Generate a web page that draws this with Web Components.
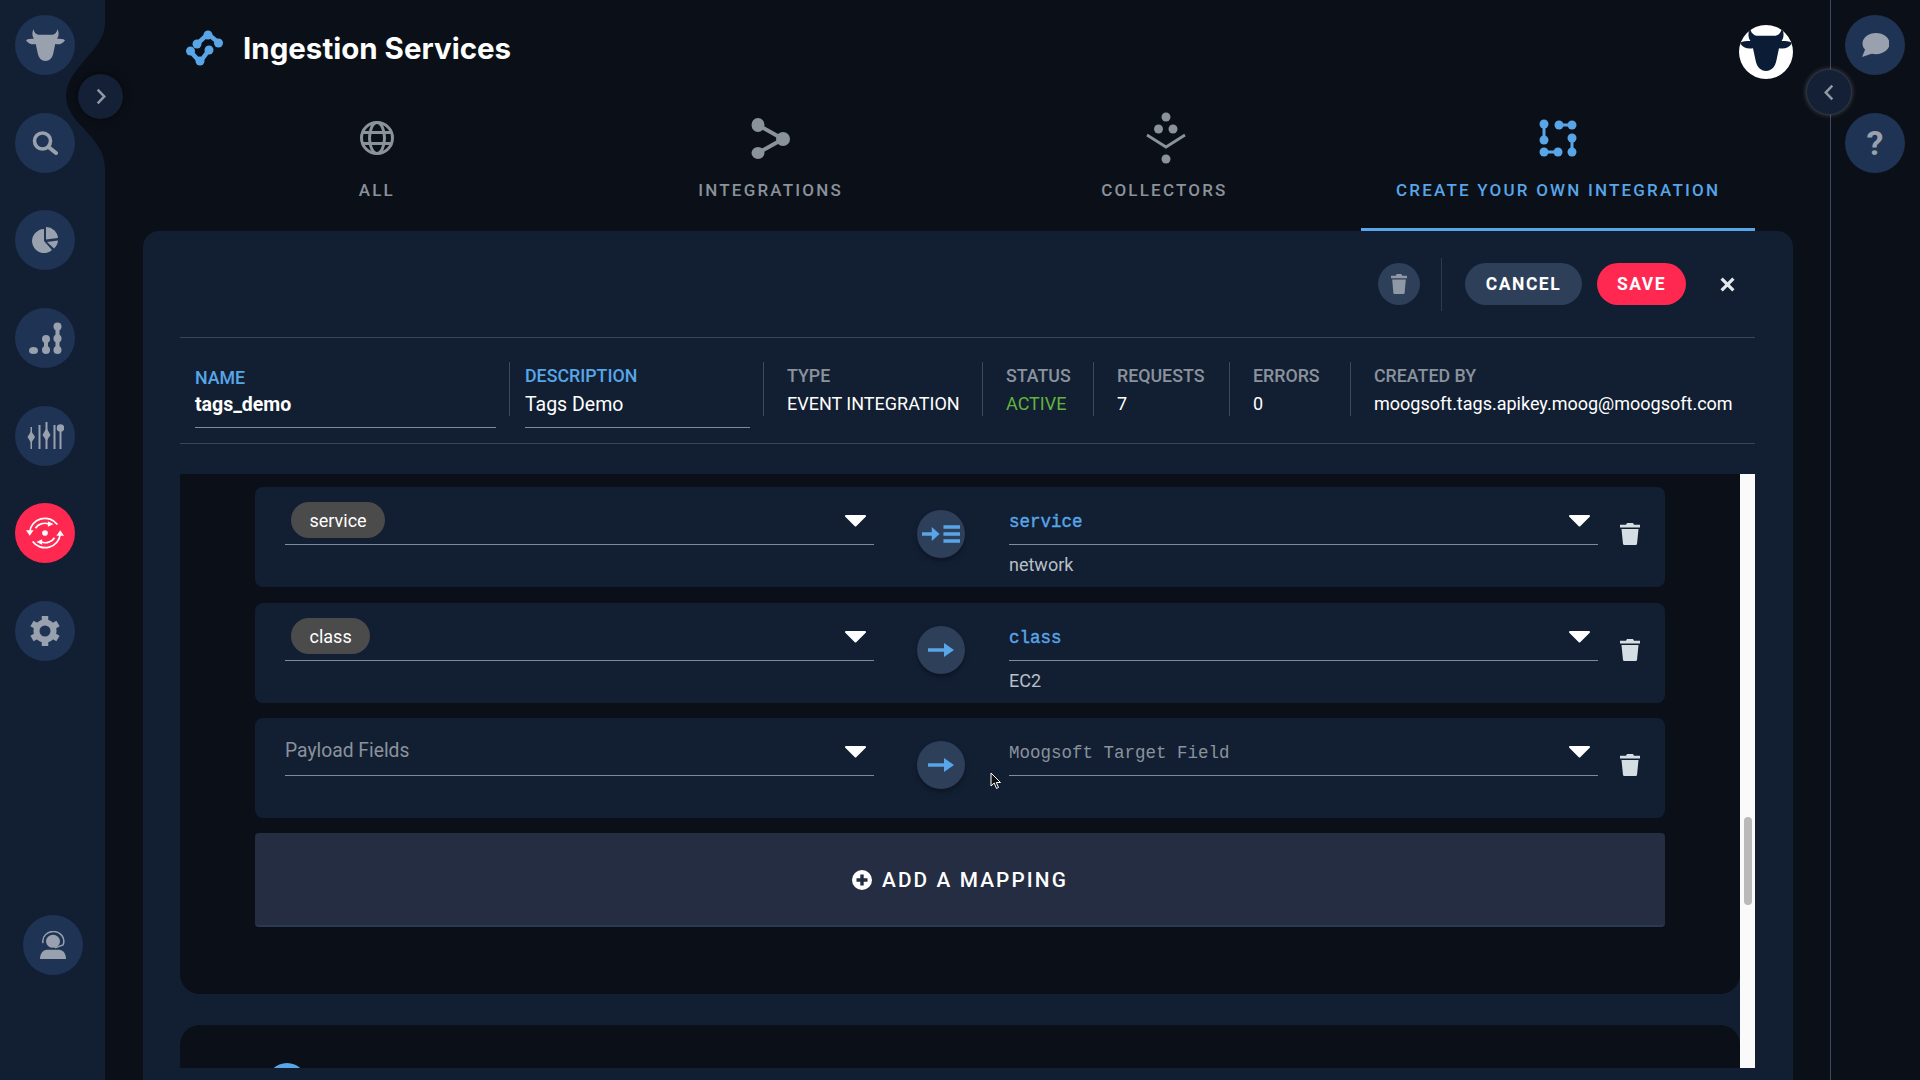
<!DOCTYPE html>
<html>
<head>
<meta charset="utf-8">
<title>Ingestion Services</title>
<style>
html, body {margin: 0; padding: 0; background: #0b0f17;}
body {font-family: Roboto, "Liberation Sans", sans-serif; color: #fff;}
</style>
</head>
<body>
<moog-app></moog-app>
<script>
const COW = 'M8 0C8 3 10 6 14 6L26 6C30 6 32 3 32 0C34 3 34 7 32 10C35 10 38 10 40 11.500C38 15 34 16.500 30 15.500L28 25C27 30 24 33 20 33C16 33 13 30 12 25L10 15.500C6 16.500 2 15 0 11.500C2 10 5 10 8 10C6 7 6 3 8 0Z';

// viewBox, then the inner svg markup
const ICONS = {
    cow: ['0 0 40 33', `<path fill="currentColor" d="${COW}"/>`],
    search: ['0 0 26 24', '<circle cx="10.5" cy="10" r="8" fill="none" stroke="currentColor" stroke-width="3.6"/><path d="M16.5 16L24 22" stroke="currentColor" stroke-width="4" stroke-linecap="round"/>'],
    pie: ['0 0 26 26', '<path fill="currentColor" d="M12 2A12 12 0 1 0 20 23L12 14Z"/><path fill="currentColor" d="M14 0A12 12 0 0 1 26 11L14 12.5Z"/><path fill="currentColor" d="M15 15L26 13.5A12 12 0 0 1 22 21.5Z"/>'],
    dots: ['0 0 33 33', '<g fill="currentColor"><ellipse cx="4.5" cy="28.500" rx="4.5" ry="3.500"/><circle cx="17" cy="17" r="4"/><circle cx="17" cy="28" r="4"/><rect x="15" y="17" width="4" height="11"/><circle cx="28.500" cy="4.500" r="4"/><circle cx="28.500" cy="16.500" r="4"/><circle cx="28.500" cy="28" r="4"/><rect x="26.500" y="4" width="4" height="24"/></g>'],
    sliders: ['0 0 37 27', '<g fill="currentColor"><rect x="3.500" y="5" width="1.500" height="22"/><path d="M4.200 9L8 15L4.200 21L.5 15Z"/><rect x="11.500" y="3" width="2" height="24"/><rect x="18.500" y="0" width="2" height="27"/><path d="M19.500 6L23.500 13L19.500 19L15.500 13Z"/><rect x="26.500" y="3" width="2" height="24"/><rect x="32.500" y="6" width="2" height="21"/><circle cx="33.500" cy="6" r="3.800"/></g>'],
    sync: ['0 0 40 36', '<g fill="none" stroke="currentColor" stroke-width="1.800"><path d="M4 17A16 15.500 0 0 1 33 9"/><path d="M36 19A16 15.500 0 0 1 7 27"/><path d="M10 13A11 10 0 0 1 24 8.500"/><path d="M30 23A11 10 0 0 1 16 27.500"/></g><g fill="currentColor"><circle cx="20" cy="18" r="3"/><path d="M0 15L8 15L4 21Z"/><path d="M32 21L40 21L36 15Z"/><path d="M23 5.500L29 8.500L23 11.500Z"/><path d="M17 24.500L11 27.500L17 30.500Z"/></g>'],
    gear: ['0 0 30 30', '<circle cx="15" cy="15" r="8.500" fill="none" stroke="currentColor" stroke-width="6"/><g stroke="currentColor" stroke-width="6.500"><path d="M15 0V6M15 24V30"/><path d="M2 7.500L7.200 10.500M22.800 19.500L28 22.500"/><path d="M2 22.500L7.200 19.500M22.800 10.500L28 7.500"/></g>'],
    support: ['0 0 26 30', '<circle cx="13" cy="11" r="7" fill="currentColor"/><path d="M3 13A10.500 10.500 0 1 1 23 15L15 18" fill="none" stroke="currentColor" stroke-width="1.500"/><path fill="currentColor" d="M0 30C0 24 3 20 7 20L19 20C23 20 26 24 26 30Z"/>'],
    chat: ['0 0 28 26', '<ellipse cx="15" cy="11" rx="13.500" ry="11" fill="currentColor"/><path fill="currentColor" d="M5 15L1 25L12 21Z"/>'],
    chevronRight: ['0 0 12 20', '<path d="M2 2L10 10L2 18" fill="none" stroke="currentColor" stroke-width="3"/>'],
    chevronLeft: ['0 0 12 20', '<path d="M10 2L2 10L10 18" fill="none" stroke="currentColor" stroke-width="3"/>'],
    logo: ['0 0 37 36', '<g fill="none" stroke="#58a6e8" stroke-width="4.500" stroke-linecap="round" stroke-linejoin="round"><path d="M11 14L22 4L33 13"/><path d="M4 21L14 32L23 20"/></g><g fill="#58a6e8"><circle cx="11" cy="14" r="4.500"/><circle cx="22" cy="5" r="4.500"/><circle cx="32.500" cy="13" r="4.500"/><circle cx="4.500" cy="21" r="4.500"/><circle cx="14" cy="31" r="4.500"/><circle cx="23" cy="20" r="4.500"/></g>'],
    globe: ['0 0 34 34', '<g fill="none" stroke="currentColor" stroke-width="3"><circle cx="17" cy="17" r="15.500"/><ellipse cx="17" cy="17" rx="7.500" ry="15.500"/><path d="M3 11.500H31M3 22.500H31"/></g>'],
    share: ['0 0 40 42', '<path d="M7 8L32 22L7 36" fill="none" stroke="currentColor" stroke-width="4"/><g fill="currentColor"><ellipse cx="7" cy="8" rx="6.500" ry="7"/><ellipse cx="32" cy="22" rx="7" ry="7"/><ellipse cx="7" cy="36" rx="6.500" ry="6"/></g>'],
    collectors: ['0 0 42 52', '<g fill="currentColor"><circle cx="21" cy="5" r="4.500"/><circle cx="13.500" cy="17" r="4.500"/><circle cx="28" cy="17" r="4.500"/><circle cx="21" cy="47" r="4.500"/></g><path d="M2 23L21 35L40 23" fill="none" stroke="currentColor" stroke-width="2.800"/>'],
    create: ['0 0 38 38', '<g fill="currentColor"><circle cx="5" cy="5" r="4.500"/><circle cx="5" cy="21" r="4.500"/><circle cx="20" cy="6" r="4.500"/><circle cx="33" cy="6" r="4.500"/><circle cx="33" cy="19" r="4.500"/><circle cx="33" cy="33" r="4.500"/><circle cx="5" cy="33" r="4.500"/><circle cx="19" cy="33" r="4.500"/><rect x="3.500" y="5" width="3" height="16"/><rect x="20" y="4.500" width="13" height="3"/><rect x="31.500" y="19" width="3" height="14"/><rect x="5" y="31.500" width="14" height="3"/></g>'],
    trash: ['0 0 20 24', '<path fill="currentColor" d="M7 0H13L14 2H20V5H0V2H6ZM1.500 6.500H18.500L17 23A1.500 1.500 0 0 1 15.500 24H4.500A1.500 1.500 0 0 1 3 23Z"/>'],
    close: ['0 0 14 14', '<path d="M1.500 1.500L12.500 12.500M12.500 1.500L1.500 12.500" stroke="currentColor" stroke-width="3"/>'],
    arrow: ['0 0 26 18', '<path d="M0 9H20" stroke="currentColor" stroke-width="3.500"/><path fill="currentColor" d="M16 2L26 9L16 16Z"/>'],
    arrowList: ['0 0 40 20', '<path d="M0 10H12" stroke="currentColor" stroke-width="3.500"/><path fill="currentColor" d="M10 3L18 10L10 17Z"/><path d="M22 3H39M22 10H39M22 17H39" stroke="currentColor" stroke-width="3.400"/>'],
    plus: ['0 0 20 20', '<circle cx="10" cy="10" r="10" fill="currentColor"/><path d="M10 4.500V15.500M4.500 10H15.500" stroke="#252d42" stroke-width="3.400"/>'],
    triangle: ['0 0 23 13', '<path fill="currentColor" stroke="currentColor" stroke-width="2" stroke-linejoin="round" d="M2 2H21L11.500 11.500Z"/>']
};

class MoogIcon extends HTMLElement {
    constructor() {
        super();
        this._root = this.attachShadow({mode: 'open'});
    }

    connectedCallback() {
        const [viewBox, body] = ICONS[this.getAttribute('name')];
        this._root.innerHTML =
`<style>
:host {display: inline-flex; flex: 0 0 auto; line-height: 0;}
svg {display: block; width: 100%; height: 100%;}
</style>
<svg viewBox="${viewBox}" preserveAspectRatio="none">${body}</svg>`;
    }
}
window.customElements.define('moog-icon', MoogIcon);

class MoogRound extends HTMLElement {
    constructor() {
        super();
        this._root = this.attachShadow({mode: 'open'});
        this._root.innerHTML =
`<style>
:host {display: flex; flex: 0 0 auto; align-items: center; justify-content: center; width: 60px; height: 60px; border-radius: 50%; background: #1f3354; color: #98a1ad;}
:host([active]) {background: #ff2851; color: #fff;}
</style>
<slot></slot>`;
    }
}
window.customElements.define('moog-round', MoogRound);

class MoogSidebar extends HTMLElement {
    constructor() {
        super();
        this._root = this.attachShadow({mode: 'open'});
        this._root.innerHTML =
`<style>
:host {display: flex; flex-direction: column; position: relative; box-sizing: border-box; width: 105px; height: 1080px; padding: 15px 0 105px 15px; background: #121f33;}
.items {display: flex; flex-direction: column; gap: 37.700px;}
.support {margin: auto 0 0 8px;}
.notch {position: absolute; left: 60px; top: 20px; width: 45px; height: 150px;}
.toggle {position: absolute; left: 78px; top: 74px; width: 45px; height: 45px; box-sizing: border-box; border-radius: 50%; background: #132035; color: #8f98a5; display: flex; align-items: center; justify-content: center; box-shadow: 0 0 10px rgba(0,0,0,.5);}
</style>
<svg class="notch" viewBox="60 20 45 150"><path fill="#0b0f17" d="M105 24C105 50 66 68 66 96C66 124 105 136 105 168Z"/></svg>
<div class="toggle"><moog-icon name="chevronRight" style="width:10px;height:17px"></moog-icon></div>
<div class="items">
    <moog-round><moog-icon name="cow" style="width:39px;height:32px"></moog-icon></moog-round>
    <moog-round><moog-icon name="search" style="width:26px;height:24px"></moog-icon></moog-round>
    <moog-round><moog-icon name="pie" style="width:26px;height:26px"></moog-icon></moog-round>
    <moog-round><moog-icon name="dots" style="width:33px;height:33px"></moog-icon></moog-round>
    <moog-round><moog-icon name="sliders" style="width:37px;height:27px"></moog-icon></moog-round>
    <moog-round active><moog-icon name="sync" style="width:38px;height:34px"></moog-icon></moog-round>
    <moog-round><moog-icon name="gear" style="width:30px;height:30px"></moog-icon></moog-round>
</div>
<moog-round class="support"><moog-icon name="support" style="width:26px;height:28px"></moog-icon></moog-round>`;
    }
}
window.customElements.define('moog-sidebar', MoogSidebar);

class MoogRightRail extends HTMLElement {
    constructor() {
        super();
        this._root = this.attachShadow({mode: 'open'});
        this._root.innerHTML =
`<style>
:host {display: flex; flex-direction: column; gap: 38px; position: relative; box-sizing: border-box; width: 90px; height: 1080px; padding: 15px 0 0 14px; border-left: 1px solid #3b4a60;}
.q {font: 700 34px Roboto, sans-serif;}
.toggle {position: absolute; left: -25px; top: 69px; width: 46px; height: 46px; box-sizing: border-box; border-radius: 50%; background: #132035; border: 1px solid #2c3644; box-shadow: 0 0 5px rgba(200,210,220,.3); color: #8f98a5; display: flex; align-items: center; justify-content: center;}
</style>
<div class="toggle"><moog-icon name="chevronLeft" style="width:10px;height:17px"></moog-icon></div>
<moog-round><moog-icon name="chat" style="width:28px;height:25px"></moog-icon></moog-round>
<moog-round><span class="q">?</span></moog-round>`;
    }
}
window.customElements.define('moog-right-rail', MoogRightRail);

class MoogHeader extends HTMLElement {
    constructor() {
        super();
        this._root = this.attachShadow({mode: 'open'});
        this._root.innerHTML =
`<style>
:host {display: flex; align-items: center; height: 96px; padding: 0 37px 0 81px;}
h1 {margin: 0 0 0 20px; flex: 1 1 auto; font: 700 29.500px Inter, Roboto, sans-serif; color: #fff;}
.avatar {width: 54px; height: 54px; margin-top: 8px; border-radius: 50%; background: #fff; color: #0a1c36; overflow: hidden; display: flex; justify-content: center;}
</style>
<moog-icon name="logo" style="width:37px;height:36px"></moog-icon>
<h1><slot></slot></h1>
<div class="avatar"><moog-icon name="cow" style="width:52px;height:43px;margin-top:3px"></moog-icon></div>`;
    }
}
window.customElements.define('moog-header', MoogHeader);

class MoogTab extends HTMLElement {
    constructor() {
        super();
        this._root = this.attachShadow({mode: 'open'});
        this._root.innerHTML =
`<style>
:host {display: flex; flex-direction: column; align-items: center; box-sizing: border-box; height: 135px; padding-top: 16px; border-bottom: 3px solid transparent; color: #8a929c;}
:host([active]) {color: #58a6e8; border-bottom-color: #58a6e8;}
.icon {display: flex; align-items: center; justify-content: center; height: 52px;}
.label {margin-top: 16px; font: 500 17px/20px Roboto, sans-serif; letter-spacing: 2.200px;}
</style>
<div class="icon"><slot name="icon"></slot></div>
<div class="label"><slot></slot></div>`;
    }
}
window.customElements.define('moog-tab', MoogTab);

class MoogTabs extends HTMLElement {
    constructor() {
        super();
        this._root = this.attachShadow({mode: 'open'});
        this._root.innerHTML =
`<style>
:host {display: grid; grid-template-columns: repeat(4, 1fr); margin: 0 75px;}
</style>
<slot></slot>`;
    }
}
window.customElements.define('moog-tabs', MoogTabs);

class MoogActions extends HTMLElement {
    constructor() {
        super();
        this._root = this.attachShadow({mode: 'open'});
        this._root.innerHTML =
`<style>
:host {display: flex; align-items: center; justify-content: flex-end; box-sizing: border-box; height: 107px; padding: 0 20px 0 0; border-bottom: 1px solid #39465a; color: #fff;}
.del {width: 42px; height: 42px; border-radius: 50%; background: #2e3f5a; color: #8f98a5; display: flex; align-items: center; justify-content: center;}
.sep {width: 1px; height: 53px; margin: 0 23px 0 21px; background: #2e3b4f;}
button {height: 42px; border: 0; border-radius: 21px; color: #fff; font: 700 17.500px Roboto, sans-serif; letter-spacing: 1.500px; padding: 0;}
.cancel {width: 117px; background: #2e3f5a;}
.save {width: 89px; margin-left: 15px; background: #ff2851;}
.x {margin-left: 34px;}
</style>
<div class="del"><moog-icon name="trash" style="width:16px;height:20px"></moog-icon></div>
<div class="sep"></div>
<button class="cancel">CANCEL</button>
<button class="save">SAVE</button>
<moog-icon class="x" name="close" style="width:15px;height:15px;color:#e4e8ec"></moog-icon>`;
    }
}
window.customElements.define('moog-actions', MoogActions);

class MoogInfoCell extends HTMLElement {
    constructor() {
        super();
        this._root = this.attachShadow({mode: 'open'});
        this._root.innerHTML =
`<style>
:host {display: block; position: relative; box-sizing: border-box; height: 105px; padding: 27px 14px 0 23px;}
:host([input]) {padding-left: 15px;}
:host([divider])::after {content: ""; position: absolute; right: 0; top: 24px; height: 54px; width: 1px; background: #3b4a60;}
.label {font: 500 17.800px/22px Roboto, sans-serif; color: #8a929c; white-space: nowrap;}
:host([input]) .label {color: #58a6e8;}
.value {margin-top: 6px; font: 400 18px/22px Roboto, sans-serif; color: #fff; white-space: nowrap;}
:host([input]) .value {margin-top: 7px; font-size: 19.500px;}
:host([input]) .box {height: 62px; border-bottom: 1px solid #7f8b99;}
:host([bold]) .value {font-weight: 700;}
:host([bold]) .label {padding-top: 2px; margin-bottom: -2px;}
:host([active]) .value {color: #62b23d;}
</style>
<div class="box">
<div class="label"><slot name="label"></slot></div>
<div class="value"><slot></slot></div>
</div>`;
    }
}
window.customElements.define('moog-info-cell', MoogInfoCell);

class MoogInfo extends HTMLElement {
    constructor() {
        super();
        this._root = this.attachShadow({mode: 'open'});
        this._root.innerHTML =
`<style>
:host {display: grid; grid-template-columns: 330px 254px 219px 111px 136px 121px 1fr; border-bottom: 1px solid #39465a;}
</style>
<slot></slot>`;
    }
}
window.customElements.define('moog-info', MoogInfo);

class MoogSelect extends HTMLElement {
    constructor() {
        super();
        this._root = this.attachShadow({mode: 'open'});
        this._root.innerHTML =
`<style>
:host {display: block;}
.field {display: flex; align-items: flex-end; justify-content: space-between; box-sizing: border-box; height: 58px; padding: 0 7px 6px 0; border-bottom: 1px solid #7f8b99;}
.content {display: flex; align-items: center; height: 36px;}
moog-icon {margin-bottom: 11px; color: #fff;}
.hint {margin-top: 10px; font: 400 18px/20px Roboto, sans-serif; color: #b9bfc6;}
</style>
<div class="field"><div class="content"><slot></slot></div><moog-icon name="triangle" style="width:23px;height:13px"></moog-icon></div>
<div class="hint"><slot name="hint"></slot></div>`;
    }
}
window.customElements.define('moog-select', MoogSelect);

class MoogMappingRow extends HTMLElement {
    constructor() {
        super();
        this._root = this.attachShadow({mode: 'open'});
        this._root.innerHTML =
`<style>
:host {display: grid; grid-template-columns: 589px 135px 589px 64px; box-sizing: border-box; height: 100px; padding-left: 30px; border-radius: 8px; background: #121f33;}
.mid, .end {display: flex; justify-content: center; padding-top: 23px;}
.mid {padding-right: 1px;}
.arrow {width: 48px; height: 48px; border-radius: 50%; background: #2e3f5a; color: #58a6e8; display: flex; align-items: center; justify-content: center; box-shadow: 0 3px 5px rgba(0,0,0,.35);}
.end {padding-top: 36px; color: #d5dfe3;}
</style>
<slot name="source"></slot>
<div class="mid"><div class="arrow"><slot name="arrow"></slot></div></div>
<slot name="target"></slot>
<div class="end"><moog-icon name="trash" style="width:20px;height:22px"></moog-icon></div>`;
    }
}
window.customElements.define('moog-mapping-row', MoogMappingRow);

class MoogChip extends HTMLElement {
    constructor() {
        super();
        this._root = this.attachShadow({mode: 'open'});
        this._root.innerHTML =
`<style>
:host {display: inline-flex; align-items: center; height: 36px; margin-left: 6px; padding: 0 18.500px; border-radius: 18px; background: #4b4b4b; color: #fff; font: 400 18px Roboto, sans-serif;}
</style>
<slot></slot>`;
    }
}
window.customElements.define('moog-chip', MoogChip);

class MoogMono extends HTMLElement {
    constructor() {
        super();
        this._root = this.attachShadow({mode: 'open'});
        this._root.innerHTML =
`<style>
:host {display: inline-block; padding-top: 4px; font: 400 17.500px "Liberation Mono", monospace; color: #8a929c;}
:host([value]) {color: #58a6e8; -webkit-text-stroke: .4px #58a6e8;}
</style>
<slot></slot>`;
    }
}
window.customElements.define('moog-mono', MoogMono);

class MoogAddButton extends HTMLElement {
    constructor() {
        super();
        this._root = this.attachShadow({mode: 'open'});
        this._root.innerHTML =
`<style>
:host {display: flex; align-items: center; justify-content: center; gap: 10px; box-sizing: border-box; height: 94px; padding-top: 1px; border-radius: 4px; border-bottom: 2px solid #2a3a52; background: #252d42; color: #fff; font: 500 20.800px Roboto, sans-serif; letter-spacing: 2.100px;}
</style>
<moog-icon name="plus" style="width:20px;height:20px"></moog-icon>
<slot></slot>`;
    }
}
window.customElements.define('moog-add-button', MoogAddButton);

class MoogScroller extends HTMLElement {
    constructor() {
        super();
        this._root = this.attachShadow({mode: 'open'});
        this._root.innerHTML =
`<style>
:host {display: flex; height: 594px; margin-top: 30px; overflow: hidden;}
.content {flex: 1 1 auto; display: flex; flex-direction: column; gap: 31px; min-width: 0;}
.track {flex: 0 0 15px; position: relative; background: #fafafa;}
.thumb {position: absolute; left: 4px; top: 343px; width: 8px; height: 88px; border-radius: 4px; background: #b9b9b9;}
.block {flex: 0 0 auto; box-sizing: border-box; background: #0b0f17; padding: 13px 75px 0;}
.first {display: flex; flex-direction: column; gap: 15px; height: 520px; border-radius: 0 0 20px 20px;}
.second {position: relative; height: 120px; border-radius: 20px 20px 0 0;}
.dot {position: absolute; left: 87px; top: 38px; width: 40px; height: 40px; border-radius: 50%; background: #58a6e8;}
::slotted(.second-row) {margin-top: 1px;}
</style>
<div class="content">
    <div class="block first"><slot></slot></div>
    <div class="block second"><div class="dot"></div></div>
</div>
<div class="track"><div class="thumb"></div></div>`;
    }
}
window.customElements.define('moog-scroller', MoogScroller);

class MoogPanel extends HTMLElement {
    constructor() {
        super();
        this._root = this.attachShadow({mode: 'open'});
        this._root.innerHTML =
`<style>
:host {display: block; height: 849px; margin: 0 0 0 38px; padding: 0 38px 0 37px; border-radius: 16px 16px 0 0; background: #121f33; overflow: hidden;}
</style>
<slot></slot>`;
    }
}
window.customElements.define('moog-panel', MoogPanel);

class MoogApp extends HTMLElement {
    constructor() {
        super();
        this._root = this.attachShadow({mode: 'open'});
        this._root.innerHTML =
`<style>
:host {display: grid; grid-template-columns: 105px 1725px 90px; position: relative; width: 1920px; height: 1080px; overflow: hidden; background: #0b0f17;}
main {display: block; min-width: 0;}
.cursor {position: absolute; left: 990px; top: 772px; width: 12px; height: 18px;}
.panel-wrap {margin-right: 37px;}
</style>
<moog-sidebar></moog-sidebar>
<main>
    <moog-header>Ingestion Services</moog-header>
    <moog-tabs>
        <moog-tab><moog-icon slot="icon" name="globe" style="width:34px;height:34px"></moog-icon>ALL</moog-tab>
        <moog-tab><moog-icon slot="icon" name="share" style="width:40px;height:42px"></moog-icon>INTEGRATIONS</moog-tab>
        <moog-tab><moog-icon slot="icon" name="collectors" style="width:42px;height:52px;margin-left:4px"></moog-icon>COLLECTORS</moog-tab>
        <moog-tab active><moog-icon slot="icon" name="create" style="width:38px;height:38px"></moog-icon>CREATE YOUR OWN INTEGRATION</moog-tab>
    </moog-tabs>
    <div class="panel-wrap">
    <moog-panel>
        <moog-actions></moog-actions>
        <moog-info>
            <moog-info-cell input bold divider><span slot="label">NAME</span>tags_demo</moog-info-cell>
            <moog-info-cell input divider><span slot="label">DESCRIPTION</span>Tags Demo</moog-info-cell>
            <moog-info-cell divider><span slot="label">TYPE</span>EVENT INTEGRATION</moog-info-cell>
            <moog-info-cell divider active><span slot="label">STATUS</span>ACTIVE</moog-info-cell>
            <moog-info-cell divider><span slot="label">REQUESTS</span>7</moog-info-cell>
            <moog-info-cell divider><span slot="label">ERRORS</span>0</moog-info-cell>
            <moog-info-cell><span slot="label">CREATED BY</span>moogsoft.tags.apikey.moog@moogsoft.com</moog-info-cell>
        </moog-info>
        <moog-scroller>
            <moog-mapping-row>
                <moog-select slot="source"><moog-chip>service</moog-chip></moog-select>
                <moog-icon slot="arrow" name="arrowList" style="width:39px;height:20px"></moog-icon>
                <moog-select slot="target"><moog-mono value>service</moog-mono><span slot="hint">network</span></moog-select>
            </moog-mapping-row>
            <moog-mapping-row class="second-row">
                <moog-select slot="source"><moog-chip>class</moog-chip></moog-select>
                <moog-icon slot="arrow" name="arrow" style="width:26px;height:18px"></moog-icon>
                <moog-select slot="target"><moog-mono value>class</moog-mono><span slot="hint">EC2</span></moog-select>
            </moog-mapping-row>
            <moog-mapping-row>
                <moog-select slot="source"><span style="font-size:19.300px;color:#8a929c;margin-top:-2px">Payload Fields</span></moog-select>
                <moog-icon slot="arrow" name="arrow" style="width:26px;height:18px"></moog-icon>
                <moog-select slot="target"><moog-mono>Moogsoft Target Field</moog-mono></moog-select>
            </moog-mapping-row>
            <moog-add-button>ADD A MAPPING</moog-add-button>
        </moog-scroller>
    </moog-panel>
    </div>
</main>
<moog-right-rail></moog-right-rail>
<svg class="cursor" viewBox="0 0 12 18"><path d="M1 1V14L4.200 11L6.500 16.500L8.500 15.500L6.300 10.500L10.500 10.500Z" fill="#111" stroke="#fff" stroke-width="1"/></svg>`;
    }
}
window.customElements.define('moog-app', MoogApp);
</script>
</body>
</html>
